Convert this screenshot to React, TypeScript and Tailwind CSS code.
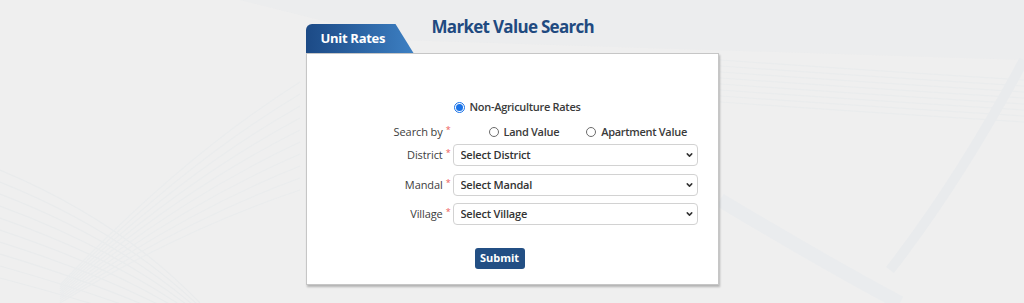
import { ChevronDown } from "lucide-react"

const font = { fontFamily: '"Open Sans", "Noto Sans", Arial, sans-serif' }

function Label({ text }: { text: string }) {
  return (
    <label className="w-[100px] shrink-0 pr-[2px] text-right text-[11px] tracking-[-0.1px] text-[#3d3d3d]">
      {text}
      <span className="ml-[3px] align-top text-[9px] leading-[12px] text-[#ee5a5a]">*</span>
    </label>
  )
}

function Radio({ checked, label }: { checked?: boolean; label: string }) {
  return (
    <span className="flex items-center gap-[5px]">
      {checked ? (
        <span className="flex h-[11px] w-[11px] items-center justify-center rounded-full border border-[#1a73e8] bg-white">
          <span className="h-[7px] w-[7px] rounded-full bg-[#1a73e8]" />
        </span>
      ) : (
        <span className="h-[10px] w-[10px] rounded-full border border-[#6b6b6b] bg-white" />
      )}
      <span className="text-[11px] font-semibold tracking-[-0.3px] text-[#3a3a3a]">{label}</span>
    </span>
  )
}

function SelectRow({ label, placeholder, className }: { label: string; placeholder: string; className?: string }) {
  return (
    <div className={`flex items-center ${className ?? ""}`}>
      <Label text={label} />
      <div className="relative w-[245px]">
        <select
          className="block h-[22px] w-full appearance-none rounded-[4px] border border-[#d2d2d2] bg-white pl-[7px] text-[11px] font-semibold tracking-[-0.2px] text-[#333] outline-none"
          style={font}
          defaultValue=""
        >
          <option value="">{placeholder}</option>
        </select>
        <ChevronDown
          className="pointer-events-none absolute right-[4px] top-1/2 h-[9px] w-[9px] -translate-y-1/2 text-[#333]"
          strokeWidth={4}
        />
      </div>
    </div>
  )
}

function Backdrop() {
  return (
    <svg className="pointer-events-none absolute inset-0 h-full w-full" viewBox="0 0 1024 303" preserveAspectRatio="none">
      <path d="M240 0 C320 20 360 30 400 40 L1024 60 L1024 0 Z" fill="#eaebed" opacity="0.6" />
      {Array.from({ length: 10 }).map((_, i) => (
        <path key={`l${i}`} d={`M0 ${170 + i * 12} Q120 ${220 + i * 10} 200 ${303 + i * 4}`} stroke="#e9ebec" strokeWidth="1.2" fill="none" />
      ))}
      {Array.from({ length: 10 }).map((_, i) => (
        <path key={`r${i}`} d={`M60 ${303 - i * 2} Q180 ${230 - i * 8} 300 ${190 - i * 12}`} stroke="#eaeced" strokeWidth="1.2" fill="none" />
      ))}
      {Array.from({ length: 8 }).map((_, i) => (
        <path key={`m${i}`} d={`M720 ${60 + i * 6} Q860 ${70 + i * 6} 1024 ${80 + i * 6}`} stroke="#eaeced" strokeWidth="1.2" fill="none" />
      ))}
      <path d="M1024 60 Q960 180 890 270" stroke="#e9ebed" strokeWidth="10" fill="none" />
      <path d="M720 200 Q820 260 900 303" stroke="#eaecee" strokeWidth="14" fill="none" />
    </svg>
  )
}

export default function App() {
  return (
    <div className="relative h-[303px] w-full overflow-hidden bg-[#efefef]" style={font}>
      <Backdrop />
      <div className="relative mx-auto w-[413px] pt-[16px]">
        <div className="flex items-start">
          <div
            className="mt-[8px] flex h-[29px] w-[108px] items-center rounded-tl-[6px] bg-gradient-to-r from-[#1c4a86] to-[#3d80c3] pl-[15px] text-[13px] font-bold tracking-[-0.3px] text-white"
            style={{ clipPath: "polygon(0 0, 90px 0, 108px 100%, 0 100%)" }}
          >
            Unit Rates
          </div>
          <h1 className="ml-[18px] text-[17px] font-bold leading-[22px] tracking-[-0.7px] text-[#1f4a80]">Market Value Search</h1>
        </div>
        <div className="h-[232px] border border-[#c6c6c6] bg-white pt-[44px] shadow-[1px_2px_2px_rgba(0,0,0,0.25)]">
          <div className="flex h-[18px] items-center pl-[147px]">
            <Radio checked label="Non-Agriculture Rates" />
          </div>
          <div className="mt-[7px] flex h-[18px] items-center pl-[46px]">
            <Label text="Search by" />
            <div className="ml-[36px] flex items-center gap-[27px]">
              <Radio label="Land Value" />
              <Radio label="Apartment Value" />
            </div>
          </div>
          <SelectRow label="District" placeholder="Select District" className="mt-[3px] pl-[46px]" />
          <SelectRow label="Mandal" placeholder="Select Mandal" className="mt-[8px] pl-[46px]" />
          <SelectRow label="Village" placeholder="Select Village" className="mt-[7px] pl-[46px]" />
          <div className="mt-[23px] flex pl-[168px]">
            <button className="h-[21px] w-[50px] rounded-[3px] bg-[#234f84] text-[11px] font-bold text-white">Submit</button>
          </div>
        </div>
      </div>
    </div>
  )
}
